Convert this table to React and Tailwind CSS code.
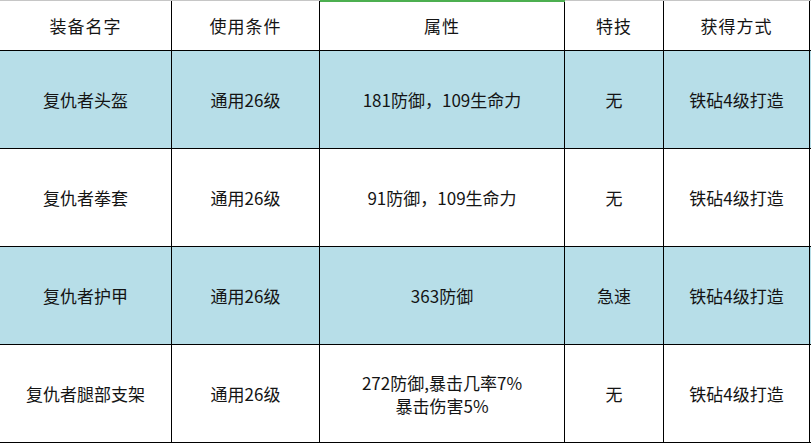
import React from 'react';

const cols = ['w-[172px]', 'w-[148px]', 'w-[245px]', 'w-[99px]', 'w-[146px]'];

const header = ['装备名字', '使用条件', '属性', '特技', '获得方式'];

const rows = [
    { blue: true, cells: ['复仇者头盔', '通用26级', '181防御，109生命力', '无', '铁砧4级打造'] },
    { blue: false, cells: ['复仇者拳套', '通用26级', '91防御，109生命力', '无', '铁砧4级打造'] },
    { blue: true, cells: ['复仇者护甲', '通用26级', '363防御', '急速', '铁砧4级打造'] },
    { blue: false, cells: ['复仇者腿部支架', '通用26级', ['272防御,暴击几率7%', '暴击伤害5%'], '无', '铁砧4级打造'] },
];

const App = () => {
    return (
        <div
            className="w-[811px] h-[443px] bg-white text-[#141414] text-[17px] overflow-hidden"
            style={{ fontFamily: '"Noto Sans CJK SC", "Noto Sans", sans-serif' }}
        >
            {/* header */}
            <div className="flex h-[51px] border-t border-[#c6c6c6] border-b border-b-black">
                {header.map((h, i) => (
                    <div
                        key={h}
                        className={`${cols[i]} relative flex items-center justify-center border-r border-black tracking-[1px]`}
                    >
                        {i === 2 && <div className="absolute left-0 right-[-1px] top-[-1px] h-[2px] bg-[#4caf50]" />}
                        {h}
                    </div>
                ))}
            </div>
            {rows.map((r, ri) => (
                <div key={ri} className={`flex h-[98px] border-b border-black ${r.blue ? 'bg-[#b7dee8]' : 'bg-white'}`}>
                    {r.cells.map((c, i) => (
                        <div
                            key={i}
                            className={`${cols[i]} flex flex-col items-center justify-center border-r border-black leading-[23px]`}
                        >
                            {Array.isArray(c) ? c.map((l) => <span key={l}>{l}</span>) : c}
                        </div>
                    ))}
                </div>
            ))}
        </div>
    );
};

export default App;
